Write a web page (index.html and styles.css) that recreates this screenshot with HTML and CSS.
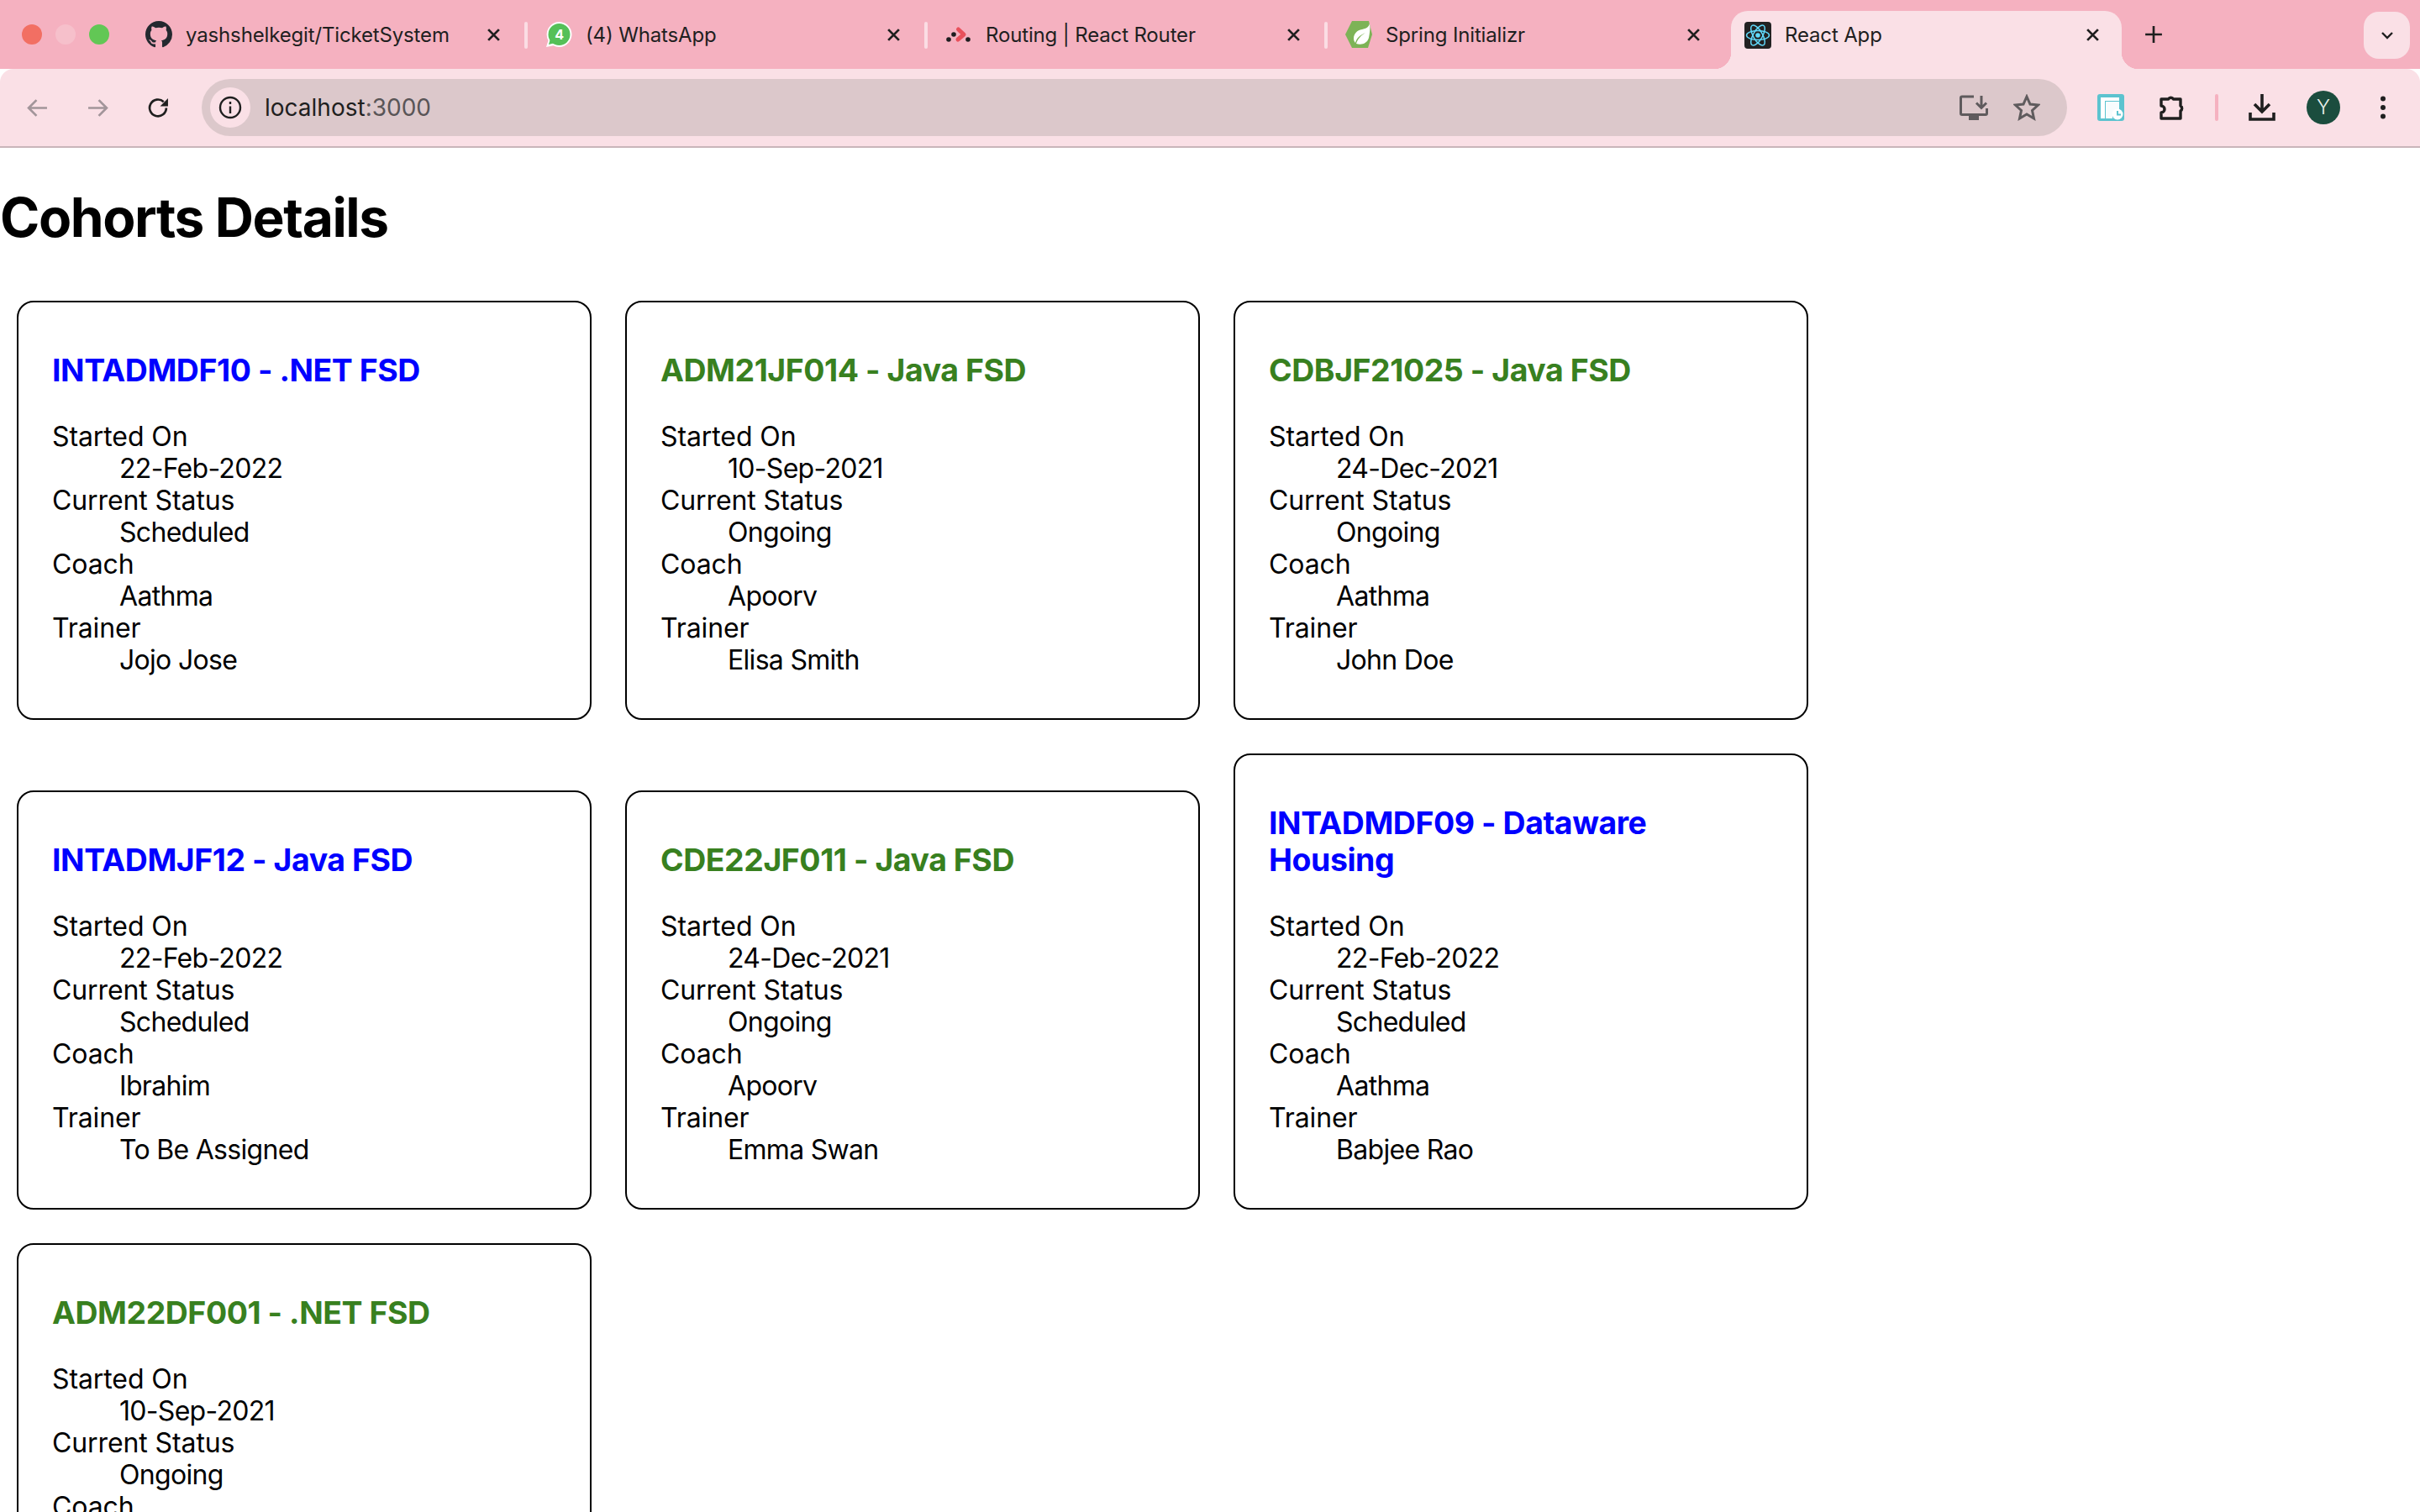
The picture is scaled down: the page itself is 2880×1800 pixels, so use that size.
FILE: index.html
```html
<!doctype html>
<html lang="en">
  <head>
    <meta charset="utf-8" />
    <title>React App</title>
    <link rel="stylesheet" href="styles.css">
  </head>

  <body>
    <header class="browser">
      <div class="tab-strip">
        <div class="lights">
          <span class="light light-red"></span>
          <span class="light light-idle"></span>
          <span class="light light-green"></span>
        </div>

        <div class="tab">
          <svg class="favicon" viewBox="0 0 16 16"><path fill="#24292f" d="M8 0C3.58 0 0 3.58 0 8c0 3.54 2.29 6.53 5.47 7.59.4.07.55-.17.55-.38 0-.19-.01-.82-.01-1.49-2.01.37-2.53-.49-2.69-.94-.09-.23-.48-.94-.82-1.13-.28-.15-.68-.52-.01-.53.63-.01 1.08.58 1.23.82.72 1.21 1.87.87 2.33.66.07-.52.28-.87.51-1.07-1.78-.2-3.64-.89-3.64-3.95 0-.87.31-1.59.82-2.15-.08-.2-.36-1.02.08-2.12 0 0 .67-.21 2.2.82.64-.18 1.32-.27 2-.27.68 0 1.36.09 2 .27 1.53-1.04 2.2-.82 2.2-.82.44 1.1.16 1.92.08 2.12.51.56.82 1.27.82 2.15 0 3.07-1.87 3.75-3.65 3.95.29.25.54.73.54 1.48 0 1.07-.01 1.93-.01 2.2 0 .21.15.46.55.38A8.013 8.013 0 0016 8c0-4.42-3.58-8-8-8z"/></svg>
          <span class="tab-title">yashshelkegit/TicketSystem</span>
          <svg class="tab-close" viewBox="0 0 16 16"><path d="M2 2l12 12M14 2L2 14"/></svg>
        </div>
        <span class="tab-sep"></span>

        <div class="tab">
          <svg class="favicon" viewBox="0 0 32 32">
            <path fill="#fff" d="M16.500 1a15 15 0 1 1-7 28.300L1 31l2.500-7.700A15 15 0 0 1 16.500 1z"/>
            <circle cx="16.500" cy="16" r="13" fill="#55c058"/>
            <path fill="#55c058" d="M6 21l-2 7 8-2z"/>
            <text class="wa-count" x="16.500" y="22" text-anchor="middle">4</text>
          </svg>
          <span class="tab-title">(4) WhatsApp</span>
          <svg class="tab-close" viewBox="0 0 16 16"><path d="M2 2l12 12M14 2L2 14"/></svg>
        </div>
        <span class="tab-sep"></span>

        <div class="tab">
          <svg class="favicon" viewBox="0 0 32 32">
            <circle cx="4" cy="22" r="2.800" fill="#1d1d1f"/>
            <circle cx="10" cy="16" r="2.800" fill="#1d1d1f"/>
            <circle cx="27" cy="22" r="2.800" fill="#1d1d1f"/>
            <path fill="none" stroke="#e8505b" stroke-width="5" stroke-linecap="round" stroke-linejoin="round" d="M15.500 10l6.500 6-7 6"/>
          </svg>
          <span class="tab-title">Routing | React Router</span>
          <svg class="tab-close" viewBox="0 0 16 16"><path d="M2 2l12 12M14 2L2 14"/></svg>
        </div>
        <span class="tab-sep"></span>

        <div class="tab">
          <svg class="favicon" viewBox="0 0 32 32">
            <path fill="#7db356" d="M8 0h20l4 16-5 16H8L0 16z"/>
            <path fill="#fff" d="M29 3c-1 4-4 6-9 7-6 1-10 5-10 11 0 2 1 4 2 5 1-5 5-9 12-12-5 3-9 7-11 13 6 2 13 0 15-7 1-6 2-11 1-17z"/>
          </svg>
          <span class="tab-title">Spring Initializr</span>
          <svg class="tab-close" viewBox="0 0 16 16"><path d="M2 2l12 12M14 2L2 14"/></svg>
        </div>

        <div class="tab tab-active">
          <svg class="favicon" viewBox="0 0 32 32">
            <rect width="32" height="32" rx="4" fill="#222"/>
            <g fill="none" stroke="#61dafb" stroke-width="1.500">
              <ellipse cx="16" cy="16" rx="13.500" ry="5.500"/>
              <ellipse cx="16" cy="16" rx="13.500" ry="5.500" transform="rotate(60 16 16)"/>
              <ellipse cx="16" cy="16" rx="13.500" ry="5.500" transform="rotate(120 16 16)"/>
            </g>
            <circle cx="16" cy="16" r="2.800" fill="#61dafb"/>
          </svg>
          <span class="tab-title">React App</span>
          <svg class="tab-close" viewBox="0 0 16 16"><path d="M2 2l12 12M14 2L2 14"/></svg>
        </div>

        <svg class="new-tab" viewBox="0 0 20 20"><path d="M10 1v18M1 10h18"/></svg>
        <div class="tab-search">
          <svg viewBox="0 0 16 10"><path d="M2 2l6 6 6-6"/></svg>
        </div>
      </div>

      <div class="toolbar">
        <svg class="nav-icon nav-off" viewBox="0 0 24 24"><path d="M23 12H2M11 3l-9 9 9 9"/></svg>
        <svg class="nav-icon nav-off" viewBox="0 0 24 24"><path d="M1 12h21M13 3l9 9-9 9"/></svg>
        <svg class="nav-icon" viewBox="0 0 24 24"><path d="M21 12a9.500 9.500 0 1 1-3-7"/><path class="solid" d="M23 1v9h-9z"/></svg>

        <div class="omnibox">
          <span class="site-info">
            <svg viewBox="0 0 28 28"><circle cx="14" cy="14" r="12"/><path d="M14 12.500V21M14 7v3"/></svg>
          </span>
          <span class="url">localhost<span class="url-port">:3000</span></span>
          <svg class="omni-icon omni-install" viewBox="0 0 34 30">
            <path d="M17 2H3a1.500 1.500 0 0 0-1.500 1.500V22A1.500 1.500 0 0 0 3 23.500h28a1.500 1.500 0 0 0 1.500-1.500v-6"/>
            <path d="M26 1v14M20 9.500l6 6 6-6"/>
            <path class="solid" d="M11 24h12v6H11z"/>
          </svg>
          <svg class="omni-icon omni-star" viewBox="0 0 32 32"><path d="M16 3l4 9 9.500 1-7 6.500 2 9.500-8.500-5-8.500 5 2-9.500-7-6.500 9.500-1z"/></svg>
        </div>

        <svg class="action action-ext" viewBox="0 0 32 32">
          <rect width="32" height="32" rx="3" fill="#5cc3cf"/>
          <path fill="#fff" d="M4 4h22v4H9v21H4z"/>
          <path fill="#fff" d="M10 9h16v11a8 8 0 0 0-8 9h-8z" opacity=".95"/>
          <circle cx="24" cy="24" r="6.500" fill="#fff"/>
          <path fill="none" stroke="#5cc3cf" stroke-width="2" d="M24 20v4.500h4"/>
        </svg>
        <svg class="action action-puzzle" viewBox="0 0 32 32"><path d="M2 6h8.500a3.500 3.500 0 0 1 6 0H25v8a3.500 3.500 0 0 1 0 6v9H2v-7a4 4 0 0 0 0-8z"/></svg>
        <span class="action-sep"></span>
        <svg class="action action-download" viewBox="0 0 32 32"><path d="M16 0v20M7 12l9 9 9-9M2 22v8h28v-8"/></svg>
        <span class="avatar">Y</span>
        <svg class="action-more" viewBox="0 0 8 28"><circle cx="4" cy="3.500" r="3"/><circle cx="4" cy="14" r="3"/><circle cx="4" cy="24.500" r="3"/></svg>
      </div>
    </header>

    <main>
      <h1>Cohorts Details</h1>

      <div class="cohort-list">
        <div class="cohort-card">
          <h3 class="cohort-title scheduled">INTADMDF10 - .NET FSD</h3>
          <dl>
            <dt>Started On</dt><dd>22-Feb-2022</dd>
            <dt>Current Status</dt><dd>Scheduled</dd>
            <dt>Coach</dt><dd>Aathma</dd>
            <dt>Trainer</dt><dd>Jojo Jose</dd>
          </dl>
        </div>
        <div class="cohort-card">
          <h3 class="cohort-title ongoing">ADM21JF014 - Java FSD</h3>
          <dl>
            <dt>Started On</dt><dd>10-Sep-2021</dd>
            <dt>Current Status</dt><dd>Ongoing</dd>
            <dt>Coach</dt><dd>Apoorv</dd>
            <dt>Trainer</dt><dd>Elisa Smith</dd>
          </dl>
        </div>
        <div class="cohort-card">
          <h3 class="cohort-title ongoing">CDBJF21025 - Java FSD</h3>
          <dl>
            <dt>Started On</dt><dd>24-Dec-2021</dd>
            <dt>Current Status</dt><dd>Ongoing</dd>
            <dt>Coach</dt><dd>Aathma</dd>
            <dt>Trainer</dt><dd>John Doe</dd>
          </dl>
        </div>
        <div class="cohort-card">
          <h3 class="cohort-title scheduled">INTADMJF12 - Java FSD</h3>
          <dl>
            <dt>Started On</dt><dd>22-Feb-2022</dd>
            <dt>Current Status</dt><dd>Scheduled</dd>
            <dt>Coach</dt><dd>Ibrahim</dd>
            <dt>Trainer</dt><dd>To Be Assigned</dd>
          </dl>
        </div>
        <div class="cohort-card">
          <h3 class="cohort-title ongoing">CDE22JF011 - Java FSD</h3>
          <dl>
            <dt>Started On</dt><dd>24-Dec-2021</dd>
            <dt>Current Status</dt><dd>Ongoing</dd>
            <dt>Coach</dt><dd>Apoorv</dd>
            <dt>Trainer</dt><dd>Emma Swan</dd>
          </dl>
        </div>
        <div class="cohort-card">
          <h3 class="cohort-title scheduled">INTADMDF09 - Dataware Housing</h3>
          <dl>
            <dt>Started On</dt><dd>22-Feb-2022</dd>
            <dt>Current Status</dt><dd>Scheduled</dd>
            <dt>Coach</dt><dd>Aathma</dd>
            <dt>Trainer</dt><dd>Babjee Rao</dd>
          </dl>
        </div>
        <div class="cohort-card">
          <h3 class="cohort-title ongoing">ADM22DF001 - .NET FSD</h3>
          <dl>
            <dt>Started On</dt><dd>10-Sep-2021</dd>
            <dt>Current Status</dt><dd>Ongoing</dd>
            <dt>Coach</dt><dd>Aathma</dd>
            <dt>Trainer</dt><dd>John Doe</dd>
          </dl>
        </div>
      </div>
    </main>
  </body>
</html>
```

FILE: styles.css
```css
html,
body {
  margin: 0;
  padding: 0;
  height: 1800px;
  overflow: hidden;
  background: #fff;
  font-family: Inter, "Liberation Sans", sans-serif;
  color: #000;
}

/* browser chrome */
.browser {
  color: #1f1f1f;
}
.tab-strip {
  display: flex;
  height: 82px;
  background: #f5b1c0;
}
.lights {
  display: flex;
  gap: 16px;
  width: 126px;
  height: 24px;
  margin-top: 29px;
  padding-left: 26px;
}
.light {
  width: 24px;
  height: 24px;
  border-radius: 50%;
}
.light-red {
  background: #f26f63;
}
.light-idle {
  background: #f6c0cb;
}
.light-green {
  background: #62c755;
}
.tab {
  display: flex;
  align-items: center;
  gap: 16px;
  box-sizing: border-box;
  width: 472px;
  height: 56px;
  margin-top: 13px;
  padding: 0 28px 0 21px;
  font-size: 24px;
  letter-spacing: -0.15px;
}
.tab-active {
  position: relative;
  width: 465px;
  height: 69px;
  margin-left: 8px;
  padding: 0 26px 12px 16px;
  background: #fae0e6;
  border-radius: 20px 20px 0 0;
}
.tab-active::before,
.tab-active::after {
  content: '';
  position: absolute;
  bottom: 0;
  width: 20px;
  height: 20px;
}
.tab-active::before {
  left: -20px;
  background: radial-gradient(circle at 0 0, transparent 20px, #fae0e6 20.5px);
}
.tab-active::after {
  right: -20px;
  background: radial-gradient(circle at 100% 0, transparent 20px, #fae0e6 20.5px);
}
.favicon {
  flex: none;
  width: 32px;
  height: 32px;
}
.wa-count {
  font-family: Inter, sans-serif;
  font-size: 16px;
  font-weight: 700;
  fill: #fff;
}
.tab-title {
  white-space: nowrap;
}
.tab-close {
  flex: none;
  width: 17px;
  height: 17px;
  margin-left: auto;
  fill: none;
  stroke: #1f1f1f;
  stroke-width: 2.6;
}
.tab-sep {
  flex: none;
  width: 4px;
  height: 32px;
  margin-top: 26px;
  border-radius: 2px;
  background: #fbdde4;
}
.new-tab {
  width: 22px;
  height: 22px;
  margin: 30px 0 0 27px;
  fill: none;
  stroke: #1f1f1f;
  stroke-width: 2.4;
}
.tab-search {
  display: flex;
  align-items: center;
  justify-content: center;
  width: 55px;
  height: 56px;
  margin: 14px 12px 0 auto;
  border-radius: 18px;
  background: #fae0e6;
}
.tab-search svg {
  width: 16px;
  height: 10px;
  fill: none;
  stroke: #1f1f1f;
  stroke-width: 2.4;
}

.toolbar {
  display: flex;
  align-items: center;
  height: 92px;
  padding-left: 32px;
  background: #fae0e6;
  border-bottom: 2px solid #c9b5ba;
  border-radius: 16px 16px 0 0;
}
.nav-icon {
  flex: none;
  width: 25px;
  height: 25px;
  margin-right: 47px;
  fill: none;
  stroke: #1f1f1f;
  stroke-width: 2.6;
}
.nav-off {
  stroke: #a2959a;
}
.nav-icon .solid {
  fill: #1f1f1f;
  stroke: none;
}
.omnibox {
  display: flex;
  align-items: center;
  box-sizing: border-box;
  width: 2220px;
  height: 68px;
  margin-left: -8px;
  padding: 0 32px 0 10px;
  border-radius: 34px;
  background: #dcc8cb;
}
.site-info {
  display: flex;
  align-items: center;
  justify-content: center;
  width: 48px;
  height: 48px;
  border-radius: 50%;
  background: #fae0e6;
}
.site-info svg {
  width: 28px;
  height: 28px;
  fill: none;
  stroke: #1f1f1f;
  stroke-width: 2.4;
}
.url {
  margin-left: 17px;
  font-size: 28px;
}
.url-port {
  color: #595557;
}
.omni-icon {
  flex: none;
  fill: none;
  stroke: #5f5b5d;
  stroke-width: 3;
}
.omni-icon .solid {
  fill: #5f5b5d;
  stroke: none;
}
.omni-install {
  width: 34px;
  height: 30px;
  margin-left: auto;
}
.omni-star {
  width: 32px;
  height: 32px;
  margin-left: 30px;
}
.action {
  flex: none;
  width: 32px;
  height: 32px;
}
.action-ext {
  margin-left: 36px;
}
.action-puzzle {
  margin-left: 42px;
  fill: none;
  stroke: #1f1f1f;
  stroke-width: 3.4;
  stroke-linejoin: round;
  overflow: visible;
}
.action-sep {
  flex: none;
  width: 4px;
  height: 32px;
  margin-left: 34px;
  border-radius: 2px;
  background: #f5b1c0;
}
.action-download {
  margin-left: 36px;
  fill: none;
  stroke: #1f1f1f;
  stroke-width: 3.6;
}
.avatar {
  flex: none;
  width: 40px;
  height: 40px;
  margin-left: 37px;
  border-radius: 50%;
  background: #1b4d3e;
  color: #e8f0ea;
  font-size: 24px;
  font-weight: 300;
  line-height: 40px;
  text-align: center;
}
.action-more {
  flex: none;
  width: 8px;
  height: 28px;
  margin-left: 47px;
  fill: #1f1f1f;
}

/* page */
h1 {
  margin: 45px 0 41px;
  font-size: 64px;
  font-weight: 700;
  line-height: 76px;
  letter-spacing: -1.4px;
}
.cohort-list {
  display: flex;
  flex-wrap: wrap;
  align-items: flex-end;
  gap: 40px 40px;
  width: 2160px;
  padding: 20px 0 0 20px;
}
.cohort-card {
  box-sizing: border-box;
  width: 684px;
  padding: 20px 40px;
  border: 2px solid #000;
  border-radius: 20px;
}
.cohort-title {
  margin: 39px 0 38px;
  font-size: 37.44px;
  font-weight: 700;
  line-height: 44px;
  letter-spacing: -0.44px;
}
.scheduled {
  color: #0000ff;
}
.ongoing {
  color: #38801f;
}
dl {
  margin: 38px 0 30px;
  font-size: 32px;
  line-height: 38px;
}
dt {
  letter-spacing: -0.1px;
}
dd {
  margin-left: 80px;
  letter-spacing: -0.7px;
}
```
